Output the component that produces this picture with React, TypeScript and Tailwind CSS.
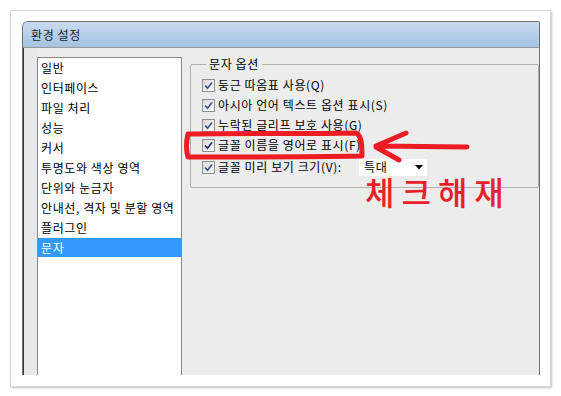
const items = [
  "일반",
  "인터페이스",
  "파일 처리",
  "성능",
  "커서",
  "투명도와 색상 영역",
  "단위와 눈금자",
  "안내선, 격자 및 분할 영역",
  "플러그인",
  "문자",
];

const Check = ({ dark }: { dark?: boolean }) => (
  <span className="w-[13px] h-[13px] shrink-0 border border-[#8e8f8f] bg-gradient-to-br from-[#dcdcdc] to-[#fbfbfb] flex items-center justify-center">
    <svg width="11" height="11" viewBox="0 0 11 11">
      <path
        d="M2 5.5 L4.5 8.2 L9 2.5"
        fill="none"
        stroke={dark ? "#1d2a66" : "#3f5592"}
        strokeWidth="1.7"
      />
    </svg>
  </span>
);

const Row = ({ label, dark }: { label: string; dark?: boolean }) => (
  <div className="h-[20px] flex items-center gap-[3px]">
    <Check dark={dark} />
    <span className="whitespace-nowrap">{label}</span>
  </div>
);

export default function App() {
  return (
    <div className="relative w-[561px] h-[396px] bg-white p-[10px] overflow-hidden font-['Noto_Sans_CJK_KR',sans-serif] text-[12px] leading-[14px] tracking-[0.6px] text-black">
      <div className="w-[541px] h-[377px] border border-[#d6d6d6] bg-white shadow-[1px_1px_2px_rgba(0,0,0,0.25)]">
        <div className="ml-[11px] mt-[10px] w-[518px] h-[354px] flex flex-col rounded-tl-[6px] rounded-tr-[2px] border-t border-l border-r border-[#6e6e6e] overflow-hidden bg-[#ececec]">
          <div className="h-[26px] shrink-0 bg-gradient-to-b from-[#c8dbef] to-[#a5c3e3] border-b border-[#9a9a9a] flex items-center pl-[8px] text-[#1e1e1e]">
            환경 설정
          </div>
          <div className="flex flex-1">
            <div className="w-[14px] bg-[#e6e8eb] border-l border-[#3c3c3c]" />
            <div className="mt-[9px] w-[145px] border-l border-t border-r border-[#8a8a8a] bg-white">
              {items.map((t) => (
                <div
                  key={t}
                  className={
                    t === "문자"
                      ? "h-[19px] flex items-center pl-[3px] bg-[#3399ff] text-white"
                      : "h-[20px] flex items-center pl-[3px]"
                  }
                >
                  {t}
                </div>
              ))}
            </div>
            <fieldset className="ml-[8px] mt-[9px] w-[349px] h-[131px] border border-[#b0b0b0] rounded-[2px] px-[11px] pt-[4px]">
              <legend className="ml-[4px] px-[3px] leading-[14px]">문자 옵션</legend>
              <Row label="둥근 따옴표 사용(Q)" />
              <Row label="아시아 언어 텍스트 옵션 표시(S)" />
              <Row label="누락된 글리프 보호 사용(G)" />
              <Row label="글꼴 이름을 영어로 표시(F)" dark />
              <div className="h-[24px] flex items-center gap-[3px]">
                <Check />
                <span className="w-[138px] whitespace-nowrap">글꼴 미리 보기 크기(V):</span>
                <div className="w-[68px] h-[17px] bg-white flex items-center justify-between pl-[5px] pr-[4px]">
                  <span>특대</span>
                  <svg width="8" height="5" viewBox="0 0 8 5">
                    <path d="M0 0 H8 L4 4.5 Z" fill="#000" />
                  </svg>
                </div>
              </div>
            </fieldset>
          </div>
        </div>
      </div>

      <svg className="absolute left-0 top-0 pointer-events-none" width="561" height="396" viewBox="0 0 561 396">
        <path
          d="M190 134 C250 133 310 134 356 133 C361 135 362 142 362 156 C300 157 240 157 188 157 C186 150 186 142 188 134"
          fill="none"
          stroke="#ee1c25"
          strokeWidth="5"
          strokeLinejoin="round"
          strokeLinecap="round"
        />
        <path
          d="M376 146 L467 147 M376 146 L406 133 M376 147 L399 160"
          fill="none"
          stroke="#ee1c25"
          strokeWidth="5"
          strokeLinecap="round"
        />
      </svg>
      <div className="absolute left-[365px] top-[179px] text-[32px] leading-[24px] tracking-[7px] text-[#e8202a] font-medium">
        체크해재
      </div>
    </div>
  );
}
